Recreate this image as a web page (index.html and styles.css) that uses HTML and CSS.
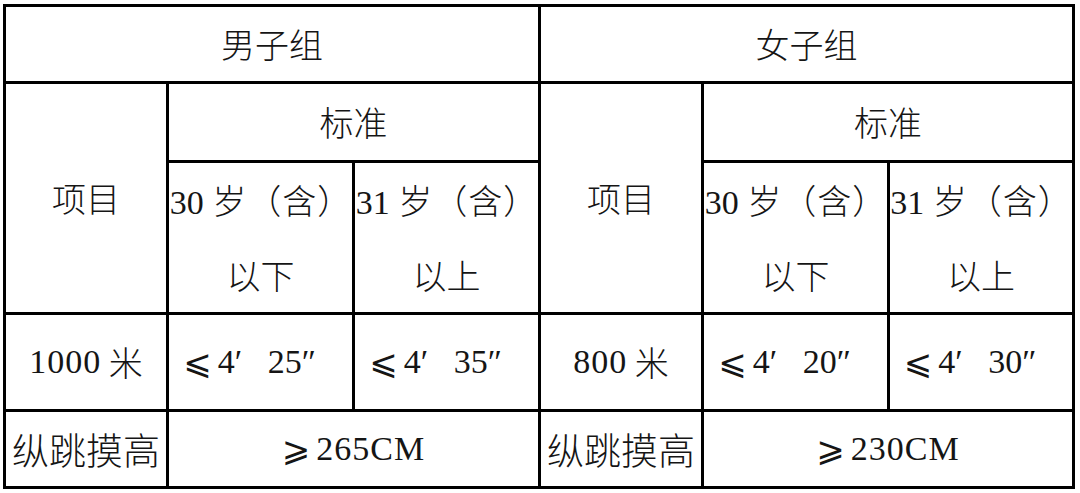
FILE: index.html
```html
<!DOCTYPE html>
<html lang="zh-CN">
<head>
<meta charset="utf-8">
<title>体能测试标准</title>
<link rel="stylesheet" href="styles.css">
</head>
<body>
<div class="sheet">
  <div class="cell span3">男子组</div>
  <div class="cell span3">女子组</div>

  <div class="cell rows2">项目</div>
  <div class="cell span2">标准</div>
  <div class="cell rows2">项目</div>
  <div class="cell span2">标准</div>

  <div class="cell age"><span class="age-top"><span class="num">30</span> 岁（含）</span><span class="age-bottom">以下</span></div>
  <div class="cell age"><span class="age-top"><span class="num">31</span> 岁（含）</span><span class="age-bottom">以上</span></div>
  <div class="cell age"><span class="age-top"><span class="num">30</span> 岁（含）</span><span class="age-bottom">以下</span></div>
  <div class="cell age"><span class="age-top"><span class="num">31</span> 岁（含）</span><span class="age-bottom">以上</span></div>

  <div class="cell"><span class="num spaced">1000</span>&nbsp;米</div>
  <div class="cell time"><span class="cmp">⩽</span><span class="num">4′&nbsp;&nbsp;&nbsp;25″</span></div>
  <div class="cell time"><span class="cmp">⩽</span><span class="num">4′&nbsp;&nbsp;&nbsp;35″</span></div>
  <div class="cell"><span class="num spaced">800</span>&nbsp;米</div>
  <div class="cell time"><span class="cmp">⩽</span><span class="num">4′&nbsp;&nbsp;&nbsp;20″</span></div>
  <div class="cell time"><span class="cmp">⩽</span><span class="num">4′&nbsp;&nbsp;&nbsp;30″</span></div>

  <div class="cell big">纵跳摸高</div>
  <div class="cell span2"><span class="cmp">⩾</span><span class="num spaced">265CM</span></div>
  <div class="cell big">纵跳摸高</div>
  <div class="cell span2"><span class="cmp">⩾</span><span class="num spaced">230CM</span></div>
</div>
</body>
</html>
```

FILE: styles.css
```css
* {
  box-sizing: border-box;
}

html, body {
  margin: 0;
  padding: 0;
  background: #ffffff;
}

body {
  padding: 4px 0 0 3px;
  font-family: "Noto Sans CJK SC", "Liberation Serif", serif;
  font-weight: 300;
  color: #151515;
}

.sheet {
  display: grid;
  grid-template-columns: 163px 186px 186px 163px 186px 185px;
  grid-template-rows: 77px 79px 152px 97px 77px;
  width: 1072px;
  border-left: 3px solid #000;
  border-top: 3px solid #000;
}

.cell {
  display: flex;
  flex-direction: row;
  align-items: center;
  justify-content: center;
  border-right: 3px solid #000;
  border-bottom: 3px solid #000;
  font-size: 34px;
  line-height: 1;
  white-space: nowrap;
}

.span3 {
  grid-column: span 3;
}

.span2 {
  grid-column: span 2;
}

.rows2 {
  grid-row: span 2;
}

.num {
  font-family: "Liberation Serif", serif;
  font-weight: 400;
  letter-spacing: 0;
}

.spaced {
  letter-spacing: 1px;
}

.cmp {
  font-family: "DejaVu Serif", "DejaVu Sans", serif;
  font-weight: 400;
  font-size: 34px;
  margin-right: 6px;
}

.time {
  padding-right: 22px;
}

.age {
  flex-direction: column;
  gap: 38px;
}

.age-top {
  letter-spacing: 1px;
  margin-right: -1px;
}

.big {
  font-size: 37px;
}
```
